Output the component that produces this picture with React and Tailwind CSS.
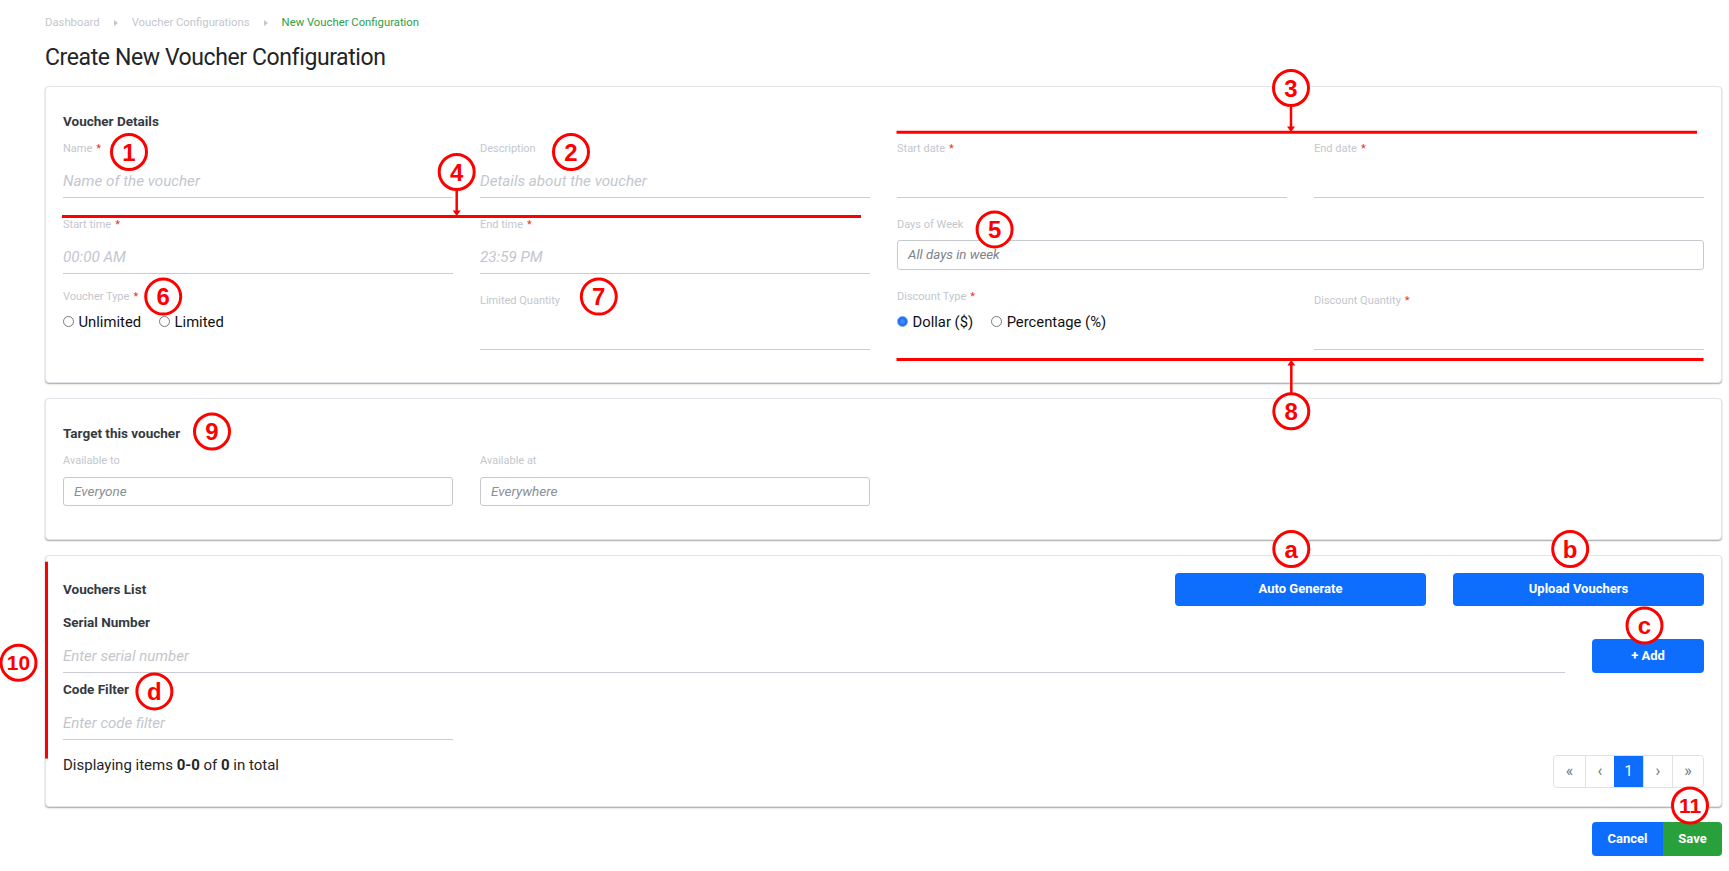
import React from "react";

const RED = "#ff0000";

function Req() {
  return <span className="ml-[4px] text-[#e3342f]">*</span>;
}

function Sep() {
  return (
    <span className="mx-[14px] flex items-center">
      <svg width="4" height="6" viewBox="0 0 4 6">
        <path d="M0 0 L4 3 L0 6 Z" fill="#c3c7cd" />
      </svg>
    </span>
  );
}

function LineField({ label, req, ph }) {
  return (
    <div>
      <div className="h-[20px] pt-[4px] text-[11px] leading-[16px] text-[#c3c7cd]">
        {label}
        {req && <Req />}
      </div>
      <div className="flex h-[41px] items-end border-b border-[#c9ccd2] pb-[7px] text-[15.2px] italic leading-[17px] text-[#c3c7cd]">
        {ph}
      </div>
    </div>
  );
}

function BoxField({ label, ph, span, boxClass }) {
  return (
    <div className={span ? "col-span-2" : ""}>
      <div className="h-[20px] pt-[4px] text-[11px] leading-[16px] text-[#c3c7cd]">{label}</div>
      <div className={boxClass}>{ph}</div>
    </div>
  );
}

function Radio({ checked, label }) {
  return (
    <span className="mr-[18px] flex items-center">
      {checked ? (
        <span className="flex h-[11px] w-[11px] items-center justify-center rounded-full border border-[#7fa7f0] bg-[#1f6ff5]">
          <span className="h-[5px] w-[5px] rounded-full bg-[#3f86f8]" />
        </span>
      ) : (
        <span className="h-[11px] w-[11px] rounded-full border border-[#7a7a7a] bg-white" />
      )}
      <span className="ml-[4.5px] text-[14.8px] leading-[20px] text-[#111111]">{label}</span>
    </span>
  );
}

function RadioField({ label, options }) {
  return (
    <div>
      <div className="h-[16px] text-[11px] leading-[16px] text-[#c3c7cd]">
        {label}
        <Req />
      </div>
      <div className="mt-[7px] flex h-[20px] items-center">
        {options.map((o) => (
          <Radio key={o.label} checked={o.checked} label={o.label} />
        ))}
      </div>
    </div>
  );
}

function Circ({ x, y, t, fs = 24 }) {
  return (
    <g>
      <circle cx={x} cy={y} r={17.5} fill="white" stroke={RED} strokeWidth={3} />
      <text
        x={x}
        y={y + fs * 0.36}
        textAnchor="middle"
        fontFamily="'Liberation Sans', Arial, sans-serif"
        fontWeight="700"
        fontSize={fs}
        fill={RED}
      >
        {t}
      </text>
    </g>
  );
}

function Annotations() {
  return (
    <svg
      className="pointer-events-none absolute left-0 top-0"
      width="1729"
      height="871"
      viewBox="0 0 1729 871"
    >
      {/* 3 */}
      <line x1="896.5" y1="132.3" x2="1697" y2="132.3" stroke={RED} strokeWidth="3" />
      <line x1="1291" y1="106" x2="1291" y2="128" stroke={RED} strokeWidth="2.5" />
      <polygon points="1287,126.5 1295,126.5 1291,132" fill={RED} />
      {/* 4 */}
      <line x1="62" y1="216.5" x2="861" y2="216.5" stroke={RED} strokeWidth="3" />
      <line x1="456.7" y1="190" x2="456.7" y2="212" stroke={RED} strokeWidth="2.5" />
      <polygon points="452.7,210.5 460.7,210.5 456.7,216" fill={RED} />
      {/* 8 */}
      <line x1="896.5" y1="359.5" x2="1703.5" y2="359.5" stroke={RED} strokeWidth="3" />
      <line x1="1291.3" y1="393" x2="1291.3" y2="364" stroke={RED} strokeWidth="2.5" />
      <polygon points="1287.3,365.5 1295.3,365.5 1291.3,360" fill={RED} />
      {/* 10 */}
      <line x1="46.5" y1="561.7" x2="46.5" y2="758.6" stroke={RED} strokeWidth="3" />

      <Circ x={129} y={152} t="1" />
      <Circ x={571} y={152} t="2" />
      <Circ x={1291} y={88} t="3" />
      <Circ x={456.7} y={172} t="4" />
      <Circ x={994.6} y={229.4} t="5" />
      <Circ x={163.2} y={296.6} t="6" />
      <Circ x={598.8} y={296.6} t="7" />
      <Circ x={1291.3} y={411.3} t="8" />
      <Circ x={212} y={431.5} t="9" />
      <Circ x={18.5} y={662.7} t="10" fs={21} />
      <Circ x={1690} y={805.5} t="11" fs={21} />
      <Circ x={1291.3} y={549} t="a" />
      <Circ x={1570.2} y={549} t="b" />
      <Circ x={1644.5} y={625.5} t="c" />
      <Circ x={154.4} y={691.4} t="d" />
    </svg>
  );
}

const CARD =
  "rounded-[4px] border border-[#e4e5ea] bg-white shadow-[0_1px_1.5px_rgba(0,0,0,0.35)]";

export default function App() {
  return (
    <div className="relative min-h-screen w-full bg-white font-['Roboto',sans-serif] text-[#212529]">
      <div className="pb-[14px] pl-[45px] pr-[7px] pt-[15px]">
        <nav className="flex h-[16px] items-center text-[11.3px] leading-[16px] text-[#c3c7cd]">
          <span>Dashboard</span>
          <Sep />
          <span>Voucher Configurations</span>
          <Sep />
          <span className="text-[#2f9e45]">New Voucher Configuration</span>
        </nav>

        <h1 className="mt-[11px] h-[32px] text-[23px] font-normal leading-[32px] tracking-[-0.4px] text-[#212529]">
          Create New Voucher Configuration
        </h1>

        {/* Voucher details */}
        <section className={`mt-[11.7px] px-[17px] pb-[32px] pt-[24px] ${CARD}`}>
          <div className="grid grid-cols-4 gap-x-[27px]">
            <h2 className="col-span-2 h-[20px] text-[13.5px] font-bold leading-[20px] text-[#343a40]">
              Voucher Details
            </h2>
          </div>
          <div className="mt-[6px] grid grid-cols-4 gap-x-[27px] gap-y-[15px]">
            <LineField label="Name" req ph="Name of the voucher" />
            <LineField label="Description" ph="Details about the voucher" />
            <LineField label="Start date" req ph="" />
            <LineField label="End date" req ph="" />

            <LineField label="Start time" req ph="00:00 AM" />
            <LineField label="End time" req ph="23:59 PM" />
            <BoxField
              span
              label="Days of Week"
              ph="All days in week"
              boxClass="mt-[7px] flex h-[30px] items-center rounded-[3px] border border-[#c6c9ce] px-[10px] text-[13.3px] italic text-[#7d8289]"
            />

            <RadioField
              label="Voucher Type"
              options={[{ label: "Unlimited" }, { label: "Limited" }]}
            />
            <LineField label="Limited Quantity" ph="" />
            <RadioField
              label="Discount Type"
              options={[{ label: "Dollar ($)", checked: true }, { label: "Percentage (%)" }]}
            />
            <LineField label="Discount Quantity" req ph="" />
          </div>
        </section>

        {/* Target */}
        <section className={`mt-[15px] px-[17px] pb-[33px] pt-[24px] ${CARD}`}>
          <h2 className="h-[20px] text-[13.5px] font-bold leading-[20px] text-[#343a40]">
            Target this voucher
          </h2>
          <div className="mt-[6px] grid grid-cols-4 gap-x-[27px]">
            <BoxField
              label="Available to"
              ph="Everyone"
              boxClass="mt-[8px] flex h-[29px] items-center rounded-[3px] border border-[#c6c9ce] px-[10px] text-[13.5px] italic text-[#8a8f95]"
            />
            <BoxField
              label="Available at"
              ph="Everywhere"
              boxClass="mt-[8px] flex h-[29px] items-center rounded-[3px] border border-[#c6c9ce] px-[10px] text-[13.5px] italic text-[#8a8f95]"
            />
          </div>
        </section>

        {/* Vouchers list */}
        <section className={`mt-[15px] px-[17px] pb-[18px] pt-[17px] ${CARD}`}>
          <div className="grid grid-cols-12 items-center gap-x-[27px]">
            <h2 className="col-span-8 text-[13.5px] font-bold leading-[20px] text-[#343a40]">
              Vouchers List
            </h2>
            <button className="col-span-2 h-[33px] rounded-[4px] bg-[#0d6efd] text-[13px] font-bold text-white">
              Auto Generate
            </button>
            <button className="col-span-2 h-[33px] rounded-[4px] bg-[#0d6efd] text-[13px] font-bold text-white">
              Upload Vouchers
            </button>
          </div>

          <div className="mt-[6px] grid grid-cols-12 items-end gap-x-[27px]">
            <div className="col-span-11">
              <div className="h-[20px] text-[13.5px] font-bold leading-[20px] text-[#343a40]">
                Serial Number
              </div>
              <div className="flex h-[41px] items-end border-b border-[#c9ccd2] pb-[7px] text-[15px] italic leading-[17px] text-[#c3c7cd]">
                Enter serial number
              </div>
            </div>
            <button className="col-span-1 h-[34px] rounded-[4px] bg-[#0d6efd] text-[13px] font-bold text-white">
              + Add
            </button>
          </div>

          <div className="mt-[6.6px] grid grid-cols-4 gap-x-[27px]">
            <div>
              <div className="h-[20px] text-[13.5px] font-bold leading-[20px] text-[#343a40]">
                Code Filter
              </div>
              <div className="flex h-[41px] items-end border-b border-[#c9ccd2] pb-[7px] text-[15px] italic leading-[17px] text-[#c3c7cd]">
                Enter code filter
              </div>
            </div>
          </div>

          <div className="mt-[15px] flex items-start justify-between">
            <div className="text-[15px] leading-[20px] text-[#212529]">
              Displaying items <b>0-0</b> of <b>0</b> in total
            </div>
            <div className="flex h-[33px] overflow-hidden rounded-[4px] border border-[#dee2e6] text-[16px] leading-none text-[#6c757d]">
              <span className="flex w-[31px] items-center justify-center pb-[2px]">«</span>
              <span className="flex w-[29px] items-center justify-center border-l border-[#dee2e6] pb-[2px]">‹</span>
              <span className="flex w-[29px] items-center justify-center bg-[#0d6efd] text-[14.5px] text-white">1</span>
              <span className="flex w-[29px] items-center justify-center border-l border-[#dee2e6] pb-[2px]">›</span>
              <span className="flex w-[31px] items-center justify-center border-l border-[#dee2e6] pb-[2px]">»</span>
            </div>
          </div>
        </section>

        <div className="mt-[15px] flex justify-end">
          <button className="h-[33.5px] w-[71px] rounded-l-[4px] bg-[#0d6efd] text-[13px] font-bold text-white">
            Cancel
          </button>
          <button className="h-[33.5px] w-[59px] rounded-r-[4px] bg-[#28a03c] text-[13px] font-bold text-white">
            Save
          </button>
        </div>
      </div>
      <Annotations />
    </div>
  );
}
